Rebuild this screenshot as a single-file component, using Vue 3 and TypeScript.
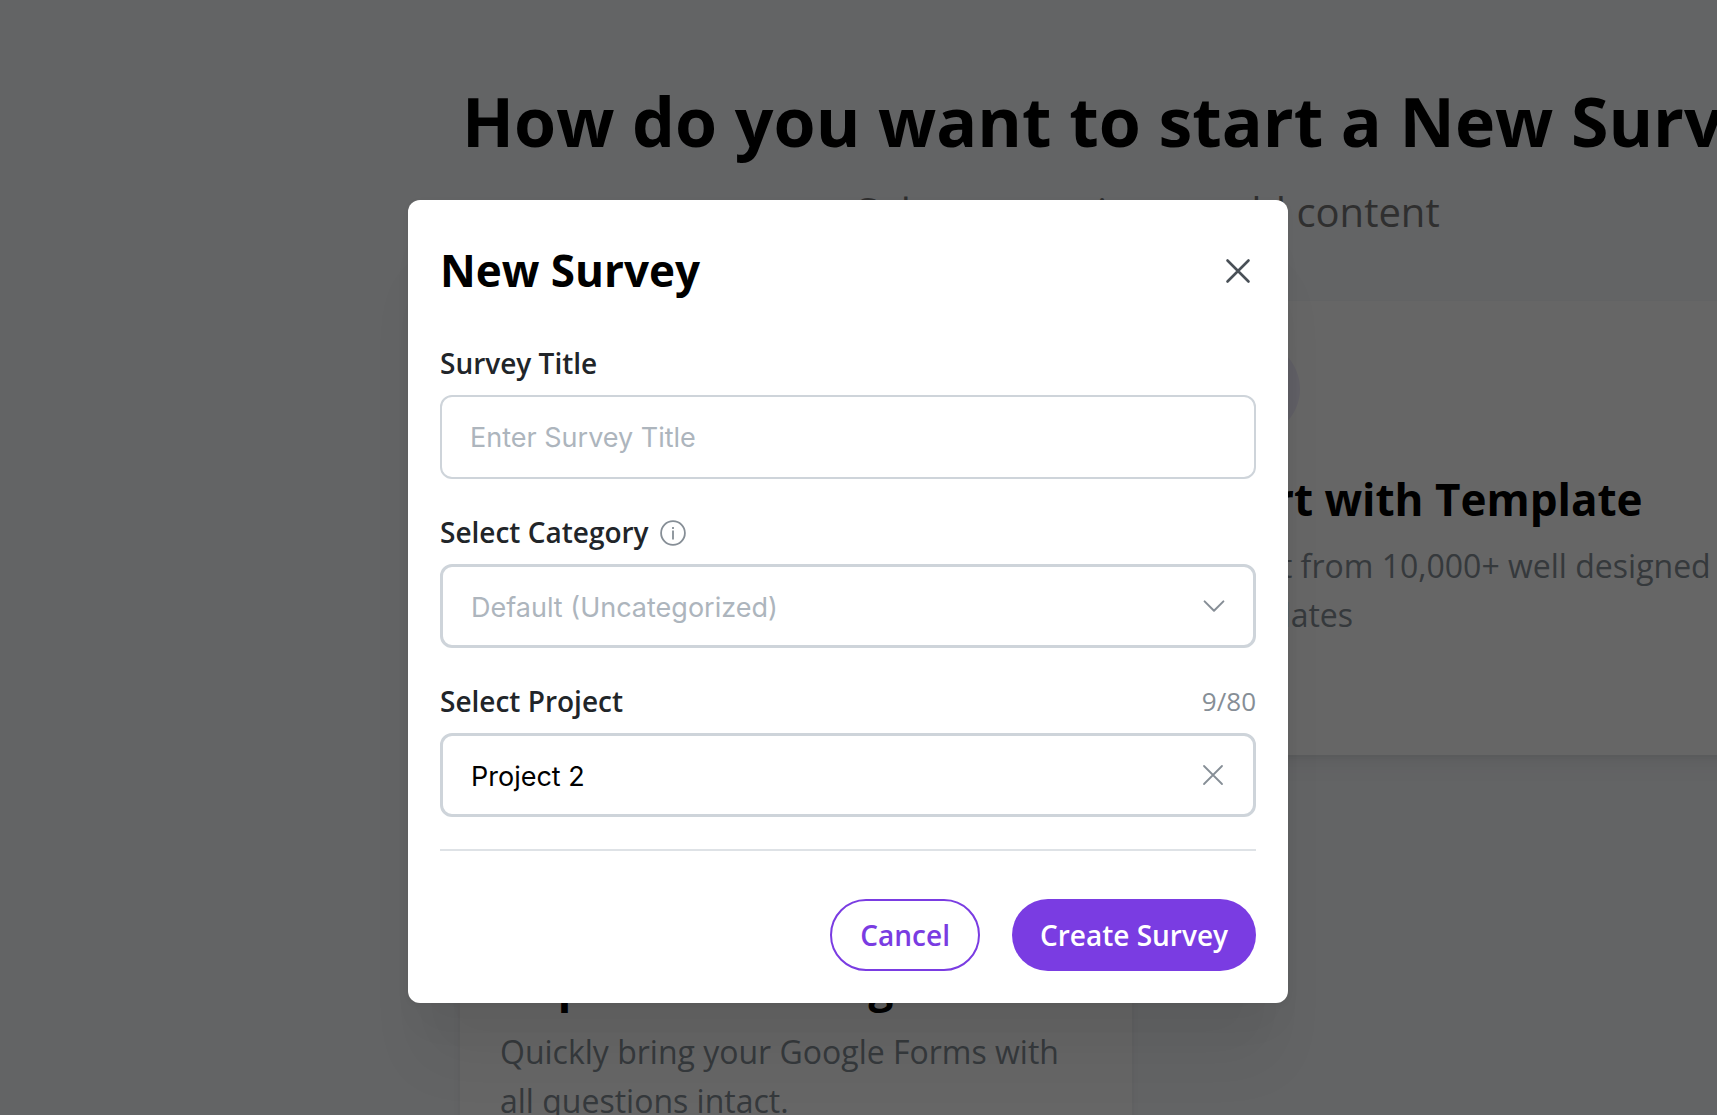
<script setup lang="ts">
import { computed, ref } from 'vue'

interface StartOption {
  id: string
  title: string
  description: string
}

const options: StartOption[] = [
  { id: 'scratch', title: '', description: '' },
  {
    id: 'template',
    title: 'Start with Template',
    description: 'Select from 10,000+ well designed templates',
  },
  {
    id: 'google',
    title: 'Import from Google Forms',
    description: 'Quickly bring your Google Forms with all questions intact.',
  },
]

const maxLength = 80
const surveyTitle = ref('')
const category = ref('')
const project = ref('Project 2')
const counter = computed(() => `${project.value.length}/${maxLength}`)
</script>

<template>
  <div class="screen">
    <main class="page">
      <header class="intro">
        <h1>How do you want to start a New Survey?</h1>
        <p>Select an option to add content</p>
      </header>
      <div class="options">
        <article v-for="option in options" :key="option.id" class="option">
          <span class="option-icon"></span>
          <h2>{{ option.title }}</h2>
          <p>{{ option.description }}</p>
        </article>
      </div>
    </main>

    <div class="overlay">
      <form class="modal" role="dialog" aria-labelledby="modal-title" @submit.prevent>
        <header class="modal-header">
          <h2 id="modal-title">New Survey</h2>
          <button type="button" class="icon-button close" aria-label="Close">
            <svg width="26" height="26" viewBox="0 0 26 26" fill="none" stroke="currentColor" stroke-width="2.6" stroke-linecap="round">
              <path d="M2.5 2.5l21 21M23.5 2.5l-21 21" />
            </svg>
          </button>
        </header>

        <div class="fields">
          <div class="field">
            <div class="field-head">
              <label for="survey-title">Survey Title</label>
            </div>
            <input id="survey-title" v-model="surveyTitle" class="control" type="text" placeholder="Enter Survey Title" />
          </div>

          <div class="field">
            <div class="field-head">
              <label for="category">Select Category</label>
              <svg class="info" width="26" height="26" viewBox="0 0 26 26" fill="none" stroke="currentColor" stroke-width="1.8">
                <circle cx="13" cy="13" r="11.9" />
                <path d="M13 10.6v8.8" />
                <path d="M13 7v2" />
              </svg>
            </div>
            <div class="control-wrap">
              <select id="category" v-model="category" class="control strong placeholder">
                <option value="">Default (Uncategorized)</option>
              </select>
              <svg class="chevron" width="22" height="22" viewBox="0 0 22 22" fill="none" stroke="currentColor" stroke-width="2" stroke-linecap="round" stroke-linejoin="round">
                <path d="M1.6 6.4l9.4 9.4 9.4-9.4" />
              </svg>
            </div>
          </div>

          <div class="field">
            <div class="field-head">
              <label for="project">Select Project</label>
              <span class="counter">{{ counter }}</span>
            </div>
            <div class="control-wrap">
              <input id="project" v-model="project" class="control strong" type="text" :maxlength="maxLength" />
              <button type="button" class="icon-button clear" aria-label="Clear project" @click="project = ''">
                <svg width="22" height="22" viewBox="0 0 22 22" fill="none" stroke="currentColor" stroke-width="1.8" stroke-linecap="round">
                  <path d="M2 2l18 18M20 2l-18 18" />
                </svg>
              </button>
            </div>
          </div>
        </div>

        <footer class="actions">
          <button type="button" class="button outline">Cancel</button>
          <button type="submit" class="button filled">Create Survey</button>
        </footer>
      </form>
    </div>
  </div>
</template>

<style>
body {
  margin: 0;
}
</style>

<style scoped>
* {
  box-sizing: border-box;
}

h1,
h2,
p {
  margin: 0;
}

.screen {
  position: relative;
  height: 100vh;
  overflow: hidden;
  background: #f8fafd;
  font-family: "Open Sans", sans-serif;
  color: #000;
}

.page {
  width: 1376px;
  margin-left: 460px;
  padding-top: 75px;
}

.intro {
  margin-bottom: 60px;
  text-align: center;
}

.intro h1 {
  font-size: 68px;
  line-height: 92px;
  font-weight: 700;
  white-space: nowrap;
}

.intro p {
  margin-top: 14px;
  font-size: 40px;
  line-height: 60px;
  color: #777;
}

.intro p {
  margin-top: 15px;
  line-height: 59px;
}

.options {
  display: grid;
  grid-template-columns: 1fr 1fr;
  gap: 32px;
}

.option {
  min-height: 454px;
  padding: 40px;
  background: #fff;
  box-shadow:
    0 2px 6px rgba(0, 0, 0, 0.05),
    0 20px 30px -10px rgba(0, 0, 0, 0.05),
    0 14px 14px -10px rgba(0, 0, 0, 0.04);
}

.option-icon {
  display: block;
  width: 96px;
  height: 96px;
  border-radius: 50%;
  background: #f1edfc;
}

.option h2 {
  margin-top: 32px;
  font-size: 44px;
  line-height: 60px;
  font-weight: 700;
  white-space: nowrap;
}

.option p {
  margin-top: 12px;
  font-size: 32px;
  line-height: 49px;
  color: #868e96;
}

.overlay {
  position: absolute;
  inset: 0;
  display: flex;
  justify-content: center;
  align-items: flex-start;
  padding: 200px 21px 0 0;
  background: rgba(0, 0, 0, 0.6);
}

.modal {
  width: 880px;
  padding: 0 32px 32px;
  background: #fff;
  border-radius: 12px;
  box-shadow:
    0 2px 6px rgba(0, 0, 0, 0.05),
    0 72px 56px -14px rgba(0, 0, 0, 0.05),
    0 34px 34px -14px rgba(0, 0, 0, 0.04);
}

.modal-header {
  display: flex;
  align-items: center;
  justify-content: space-between;
  padding: 40px 0;
}

.modal-header h2 {
  font-size: 44px;
  line-height: 61px;
  font-weight: 700;
}

.icon-button {
  display: flex;
  padding: 5px;
  border: 0;
  background: none;
}

.close {
  color: #495057;
}

.fields {
  display: flex;
  flex-direction: column;
  gap: 32px;
  padding: 1px 0 32px;
  border-bottom: 2px solid #dee2e6;
}

.field {
  display: flex;
  flex-direction: column;
  gap: 10px;
}

.field-head {
  display: flex;
  align-items: center;
  gap: 11px;
  font-size: 28px;
  line-height: 43px;
  color: #212529;
}

.field-head label {
  font-weight: 600;
}

.info {
  color: #868e96;
}

.counter {
  margin-left: auto;
  font-size: 26px;
  color: #868e96;
}

.control-wrap {
  display: flex;
  position: relative;
}

.control {
  width: 100%;
  height: 84px;
  padding: 0 28px;
  border: 2px solid #ced4da;
  border-radius: 12px;
  background: #fff;
  font-family: Inter, sans-serif;
  font-size: 27px;
  color: #000;
  appearance: none;
  outline: none;
}

.control.strong {
  padding-top: 2px;
  border-width: 3px;
}

.control::placeholder,
.control.placeholder {
  color: #adb5bd;
  opacity: 1;
}

.chevron,
.clear {
  position: absolute;
  top: 50%;
  transform: translateY(-50%);
  color: #868e96;
}

.chevron {
  right: 31px;
  pointer-events: none;
}

.clear {
  right: 27px;
}

.actions {
  display: flex;
  justify-content: flex-end;
  gap: 32px;
  padding-top: 48px;
}

.button {
  height: 72px;
  padding: 0 28px;
  border: 0;
  border-radius: 36px;
  font-family: inherit;
  font-size: 28px;
  font-weight: 600;
}

.outline {
  border: 2px solid #7a3ce2;
  background: #fff;
  color: #7a3ce2;
}

.filled {
  background: #7a3ce2;
  color: #fff;
}
</style>
